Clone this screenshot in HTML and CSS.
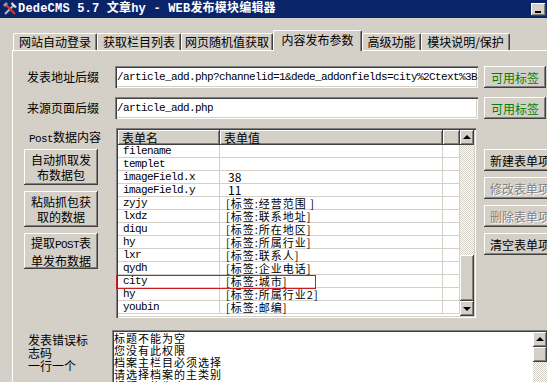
FILE: index.html
```html
<!DOCTYPE html>
<html lang="zh-CN">
  <head>
    <meta charset="UTF-8" />
    <title>DedeCMS 5.7 文章hy - WEB发布模块编辑器</title>
    <link rel="stylesheet" href="styles.css">
  </head>

  <body>
    <div id="win">
      <div class="titlebar">
        <svg class="app-icon" width="16" height="16" viewBox="0 0 16 16">
          <path d="M3 13 L12 4" stroke="#b8b8b8" stroke-width="2" />
          <path d="M10 1 L15 6 L13 7 L9 3 Z" fill="#e8e8e8" />
          <path d="M3 3 L13 13" stroke="#d04030" stroke-width="2" />
          <path d="M1 4 L4 1 L6 3 L3 6 Z" fill="#9a9a9a" />
        </svg>
        <span class="title">DedeCMS 5.7 文章hy - WEB发布模块编辑器</span>
        <span class="min-btn"></span>
      </div>

      <div class="tabs">
        <div class="tab tab-w84">网站自动登录</div>
        <div class="tab tab-w84">获取栏目列表</div>
        <div class="tab tab-w92">网页随机值获取</div>
        <div class="tab tab-active">内容发布参数</div>
        <div class="tab tab-w59">高级功能</div>
        <div class="tab tab-w89">模块说明/保护</div>
      </div>

      <div class="panel">
        <div class="field-row">
          <label class="field-label">发表地址后缀</label>
          <div class="text-input sunken">/article_add.php?channelid=1&amp;dede_addonfields=city%2Ctext%3B</div>
          <button class="btn raised tag-btn">可用标签</button>
        </div>
        <div class="field-row second">
          <label class="field-label">来源页面后缀</label>
          <div class="text-input sunken">/article_add.php</div>
          <button class="btn raised tag-btn">可用标签</button>
        </div>

        <div class="post-area">
          <div class="left-col">
            <div class="post-label"><span class="mono">Post</span>数据内容</div>
            <button class="btn raised big-btn">自动抓取发<br>布数据包</button>
            <button class="btn raised big-btn">粘贴抓包获<br>取的数据</button>
            <button class="btn raised big-btn">提取<span class="mono">POST</span>表<br>单发布数据</button>
          </div>

          <div class="list sunken">
            <div class="list-body">
              <div class="row head">
                <span class="raised">表单名</span>
                <span class="raised">表单值</span>
                <span class="raised"></span>
              </div>
              <div class="row"><span class="mono">filename</span><span></span><span></span></div>
              <div class="row"><span class="mono">templet</span><span></span><span></span></div>
              <div class="row"><span class="mono">imageField.x</span><span class="num">38</span><span></span></div>
              <div class="row"><span class="mono">imageField.y</span><span class="num">11</span><span></span></div>
              <div class="row"><span class="mono">zyjy</span><span>[标签:经营范围 ]</span><span></span></div>
              <div class="row"><span class="mono">lxdz</span><span>[标签:联系地址]</span><span></span></div>
              <div class="row"><span class="mono">diqu</span><span>[标签:所在地区]</span><span></span></div>
              <div class="row"><span class="mono">hy</span><span>[标签:所属行业]</span><span></span></div>
              <div class="row"><span class="mono">lxr</span><span>[标签:联系人]</span><span></span></div>
              <div class="row"><span class="mono">qydh</span><span>[标签:企业电话]</span><span></span></div>
              <div class="row picked"><span class="mono">city</span><span>[标签:城市]</span><span></span></div>
              <div class="row"><span class="mono">hy</span><span>[标签:所属行业2]</span><span></span></div>
              <div class="row"><span class="mono">youbin</span><span>[标签:邮编]</span><span></span></div>
            </div>
            <div class="vscroll">
              <div class="sb-btn raised up"></div>
              <div class="sb-track"></div>
              <div class="sb-thumb raised"></div>
              <div class="sb-btn raised down"></div>
            </div>
          </div>

          <div class="right-col">
            <button class="btn raised side-btn">新建表单项</button>
            <button class="btn raised side-btn off">修改表单项</button>
            <button class="btn raised side-btn off">删除表单项</button>
            <button class="btn raised side-btn">清空表单项</button>
          </div>
        </div>

        <div class="errors">
          <div class="errors-label">发表错误标<br>志码<br>一行一个</div>
          <div class="error-box sunken">
            <div class="error-text">
              标题不能为空<br>
              您没有此权限<br>
              档案主栏目必须选择<br>
              请选择档案的主类别<br>
              标题不能为空
            </div>
            <div class="vscroll small">
              <div class="sb-btn raised up"></div>
              <div class="sb-thumb raised"></div>
              <div class="sb-track"></div>
            </div>
          </div>
        </div>
      </div>
    </div>
  </body>
</html>
```

FILE: styles.css
```css
body {
  margin: 0;
  background-color: #d4d0c8;
  font-family: "Noto Sans CJK SC", sans-serif;
  font-size: 12px;
  color: #000;
  overflow: hidden;
}

#win {
  width: 547px;
  height: 382px;
  overflow: hidden;
}

.mono {
  font-family: "Liberation Mono", monospace;
  font-size: 11px;
  letter-spacing: -0.6px;
}

.raised {
  background-color: #d4d0c8;
  box-shadow: inset -1px -1px #404040, inset 1px 1px #fff,
    inset -2px -2px #808080, inset 2px 2px #d4d0c8;
}

.sunken {
  background-color: #fff;
  box-shadow: inset 1px 1px #808080, inset 2px 2px #404040,
    inset -1px -1px #fff, inset -2px -2px #d4d0c8;
}

.btn {
  border: none;
  padding: 0;
  font-family: inherit;
  font-size: 12px;
  color: #000;
}

/* title bar */
.titlebar {
  height: 18px;
  background-color: #0a246a;
  display: flex;
  align-items: center;
  padding-left: 2px;
}

.title {
  color: #fff;
  font-weight: bold;
  font-family: "Liberation Mono", "Noto Sans CJK SC", monospace;
  font-size: 12px;
  letter-spacing: 0.2px;
  white-space: nowrap;
  line-height: 18px;
}

.min-btn {
  margin-left: auto;
  margin-right: 1px;
  width: 15px;
  height: 13px;
  position: relative;
  background-color: #d4d0c8;
  box-shadow: inset -1px -1px #404040, inset 1px 1px #fff,
    inset -2px -2px #808080;
}

.min-btn::after {
  content: "";
  position: absolute;
  left: 4px;
  top: 8px;
  width: 6px;
  height: 2px;
  background-color: #000;
}

/* tabs */
.tabs {
  display: flex;
  align-items: flex-end;
  height: 20px;
  margin-top: 12px;
  padding-left: 13px;
  position: relative;
  z-index: 1;
}

.tab {
  height: 17px;
  box-sizing: border-box;
  border-top: 1px solid #fff;
  border-left: 1px solid #fff;
  border-right: 1px solid #404040;
  border-radius: 2px 2px 0 0;
  box-shadow: inset -1px 0 #808080;
  text-align: center;
  line-height: 16px;
  white-space: nowrap;
}

.tab-w84 { width: 84px; }
.tab-w92 { width: 92px; }
.tab-w59 { width: 59px; }
.tab-w89 { width: 89px; }

.tab-active {
  width: 89px;
  height: 21px;
  margin-bottom: -1px;
  background-color: #d4d0c8;
  line-height: 18px;
}

/* panel */
.panel {
  margin-left: 12px;
  width: 560px;
  height: 340px;
  border-top: 1px solid #fff;
  border-left: 1px solid #fff;
  padding-top: 15px;
  box-sizing: border-box;
}

.field-row {
  display: flex;
  align-items: center;
  height: 22px;
  padding-left: 14px;
}

.field-row.second {
  margin-top: 9px;
}

.field-label {
  width: 88px;
  line-height: 22px;
}

.text-input {
  width: 363px;
  height: 22px;
  box-sizing: border-box;
  padding: 2px 0 0 2px;
  line-height: 18px;
  font-family: "Liberation Mono", monospace;
  font-size: 11px;
  letter-spacing: -0.6px;
  white-space: nowrap;
  overflow: hidden;
}

.tag-btn {
  margin-left: 6px;
  width: 62px;
  height: 22px;
  color: #008000;
}

/* post data */
.post-area {
  display: flex;
  margin-top: 9px;
}

.left-col {
  margin-left: 11px;
  width: 74px;
}

.post-label {
  height: 21px;
  line-height: 18px;
  padding-left: 5px;
  white-space: nowrap;
}

.big-btn {
  display: block;
  width: 74px;
  height: 36px;
  margin-bottom: 6px;
  line-height: 15px;
}

.list {
  margin-left: 18px;
  width: 360px;
  height: 190px;
  box-sizing: border-box;
  padding: 2px;
  display: flex;
}

.list-body {
  width: 342px;
}

.row {
  display: grid;
  grid-template-columns: 102px 223px 17px;
  height: 13px;
}

.row span {
  box-sizing: border-box;
  border-bottom: 1px solid #d4d0c8;
  border-right: 1px solid #d4d0c8;
  font-size: 11px;
  letter-spacing: 1px;
  line-height: 12px;
  padding-left: 6px;
  white-space: nowrap;
}

.row span.mono {
  padding-left: 5px;
  letter-spacing: -0.6px;
}

.row span.num {
  font-size: 12px;
  letter-spacing: 0;
  padding-left: 8px;
}

.row.head {
  height: 15px;
}

.row.head span {
  border: none;
  font-size: 12px;
  letter-spacing: 0;
  line-height: 15px;
  padding-left: 4px;
}

.row.picked {
  position: relative;
}

.row.picked::after {
  content: "";
  position: absolute;
  left: -2px;
  top: 0;
  width: 200px;
  height: 14px;
  box-sizing: border-box;
  border: 1px solid #c42020;
}

/* scrollbars */
.vscroll {
  width: 14px;
  display: flex;
  flex-direction: column;
}

.sb-btn {
  height: 15px;
  flex-shrink: 0;
  position: relative;
}

.sb-btn::after {
  content: "";
  position: absolute;
  left: 3px;
  border-left: 4px solid transparent;
  border-right: 4px solid transparent;
}

.sb-btn.up::after {
  top: 5px;
  border-bottom: 4px solid #000;
}

.sb-btn.down::after {
  top: 6px;
  border-top: 4px solid #000;
}

.sb-track {
  flex: 1;
  background: repeating-conic-gradient(#d4d0c8 0 25%, #fff 0 50%) 0 0 / 2px 2px;
}

.sb-thumb {
  height: 46px;
  flex-shrink: 0;
}

.vscroll.small .sb-thumb {
  height: 15px;
}

.right-col {
  margin-left: 8px;
  padding-top: 21px;
  display: flex;
  flex-direction: column;
  gap: 6px;
}

.side-btn {
  width: 72px;
  height: 22px;
  text-align: left;
  padding-left: 6px;
  white-space: nowrap;
}

.side-btn.off {
  color: #808080;
  text-shadow: 1px 1px #fff;
}

/* error codes */
.errors {
  display: flex;
  margin-top: 12px;
}

.errors-label {
  margin-left: 15px;
  width: 84px;
  padding-top: 3px;
  line-height: 13px;
}

.error-box {
  width: 437px;
  height: 60px;
  box-sizing: border-box;
  padding: 2px;
  display: flex;
}

.error-text {
  flex: 1;
  font-size: 11px;
  letter-spacing: 1px;
  line-height: 12px;
  overflow: hidden;
}
```
